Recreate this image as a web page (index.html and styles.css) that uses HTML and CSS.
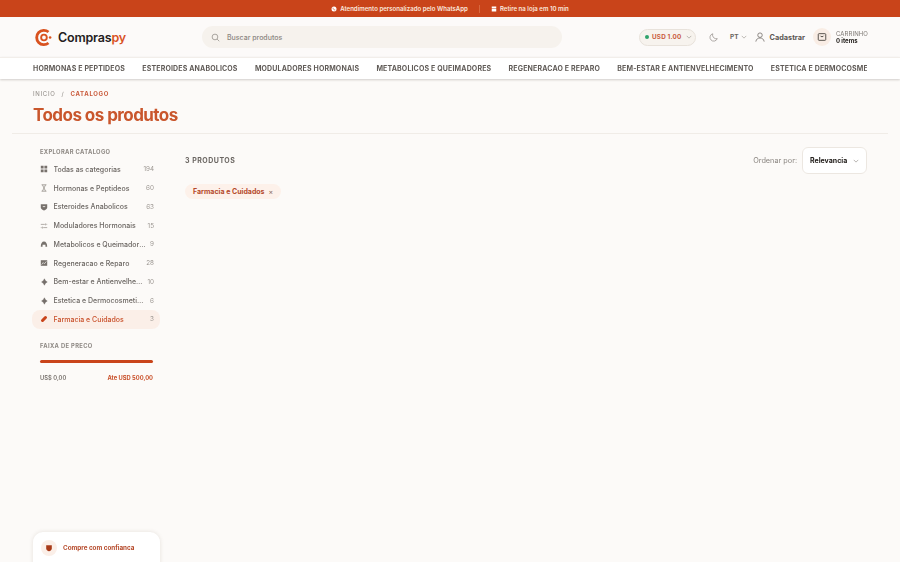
FILE: index.html
```html
<!DOCTYPE html>
<html lang="pt">
<head>
<meta charset="utf-8">
<title>Compraspy</title>
<link rel="stylesheet" href="styles.css">
</head>
<body>
<div class="topbar">
  <span class="top-item"><svg class="ti" viewBox="0 0 12 12"><circle cx="6" cy="6" r="5" fill="#fff"/><path d="M4 3.500c0 2.500 2 4.500 4.500 4.500" stroke="#c9441a" stroke-width="1.300" fill="none"/></svg>Atendimento personalizado pelo WhatsApp</span>
  <span class="top-sep"></span>
  <span class="top-item"><svg class="ti" viewBox="0 0 12 12"><path d="M1.500 1h9v4h-9zM1.500 6h9v5h-9z" fill="#fff"/></svg>Retire na loja em 10 min</span>
</div>
<header class="header">
  <div class="brand">
    <svg class="logo" viewBox="0 0 18 20"><path d="M14.300 4.200A7.600 7.600 0 1 0 14.300 15.800" fill="none" stroke="#d9521f" stroke-width="3"/><circle cx="9.500" cy="10" r="3" fill="none" stroke="#d9521f" stroke-width="2"/><circle cx="16" cy="10" r="1.400" fill="#d9521f"/></svg>
    <span class="brand-name">Compras<span class="brand-py">py</span></span>
  </div>
  <div class="search">
    <svg class="search-ic" viewBox="0 0 12 12"><circle cx="5.300" cy="5.300" r="3.800" fill="none" stroke="#85807b" stroke-width=".9"/><path d="M8.200 8.200l2.800 2.800" stroke="#85807b" stroke-width=".9"/></svg>
    <span>Buscar produtos</span>
  </div>
  <div class="actions">
    <div class="currency"><span class="dot"></span><span class="cur-text">USD 1.00</span><svg class="chev" viewBox="0 0 8 8"><path d="M1 2.500l3 3 3-3" fill="none" stroke="#a19b95" stroke-width=".9"/></svg></div>
    <svg class="moon" viewBox="0 0 12 12"><path d="M5 1a5 5 0 1 0 6 6.500A5 5 0 0 1 5 1z" fill="none" stroke="#8a8580" stroke-width=".9"/></svg>
    <div class="lang">PT<svg class="chev" viewBox="0 0 8 8"><path d="M1 2.500l3 3 3-3" fill="none" stroke="#a19b95" stroke-width=".9"/></svg></div>
    <div class="account"><svg class="user" viewBox="0 0 12 12"><circle cx="6" cy="3.800" r="2.700" fill="none" stroke="#6b6662" stroke-width=".9"/><path d="M1 11.500c.5-3 2.500-4.300 5-4.300s4.500 1.300 5 4.300" fill="none" stroke="#6b6662" stroke-width=".9"/></svg>Cadastrar</div>
    <div class="cart">
      <span class="cart-ic"><svg viewBox="0 0 12 12"><rect x="1.500" y="2" width="9" height="8" rx="1" fill="none" stroke="#3c3733" stroke-width="1"/><path d="M4 4.500c.3 1.500 3.700 1.500 4 0" fill="none" stroke="#3c3733" stroke-width="1"/></svg></span>
      <div class="cart-text"><span class="cart-label">CARRINHO</span><span class="cart-count">0 items</span></div>
    </div>
  </div>
</header>
<nav class="nav">
  <div class="nav-inner">
    <a>HORMONAS E PEPTIDEOS</a><a>ESTEROIDES ANABOLICOS</a><a>MODULADORES HORMONAIS</a><a>METABOLICOS E QUEIMADORES</a><a>REGENERACAO E REPARO</a><a>BEM-ESTAR E ANTIENVELHECIMENTO</a><a>ESTETICA E DERMOCOSMETICOS</a>
  </div>
</nav>
<section class="page-head">
  <div class="crumbs"><span>INICIO</span><span class="crumb-sep">/</span><span class="crumb-now">CATALOGO</span></div>
  <h1>Todos os produtos</h1>
</section>
<main class="main">
  <aside class="side">
    <div class="side-title">EXPLORAR CATALOGO</div>
    <ul class="cats">
      <li><svg class="ci" viewBox="0 0 10 10"><path d="M1 1h3.500v3.500H1zM5.500 1H9v3.500H5.500zM1 5.500h3.500V9H1zM5.500 5.500H9V9H5.500z" fill="#77716c"/></svg><span class="cn">Todas as categorias</span><span class="cc">194</span></li>
      <li><svg class="ci" viewBox="0 0 10 10"><path d="M2 1h6M2 9h6M3 1l4 8M7 1L3 9" fill="none" stroke="#96908a" stroke-width="1"/></svg><span class="cn">Hormonas e Peptideos</span><span class="cc">60</span></li>
      <li><svg class="ci" viewBox="0 0 10 10"><path d="M1 1.500h8V6c0 1.500-2 2.700-4 3.300C3 8.700 1 7.500 1 6z" fill="#77716c"/><path d="M3.500 4.500h3" stroke="#fcfaf8"/></svg><span class="cn">Esteroides Anabolicos</span><span class="cc">63</span></li>
      <li><svg class="ci" viewBox="0 0 10 10"><path d="M1 3h5M8 3h1M1 7h1M4 7h5" stroke="#96908a" stroke-width=".9"/><path d="M7 1.800v2.400M3 5.800v2.400" stroke="#96908a" stroke-width=".9"/></svg><span class="cn">Moduladores Hormonais</span><span class="cc">15</span></li>
      <li><svg class="ci" viewBox="0 0 10 10"><path d="M1 8.500C1 4.500 2.500 2 5 2s4 2.500 4 6.500H6.800V6H3.200v2.500z" fill="#77716c"/></svg><span class="cn">Metabolicos e Queimadores</span><span class="cc">9</span></li>
      <li><svg class="ci" viewBox="0 0 10 10"><rect x="1" y="1.500" width="8" height="7" fill="#77716c"/><path d="M2 7l2-2.500 1.500 1.500L8 3" fill="none" stroke="#fcfaf8" stroke-width=".8"/></svg><span class="cn">Regeneracao e Reparo</span><span class="cc">28</span></li>
      <li><svg class="ci" viewBox="0 0 10 10"><path d="M5.500 1v8M2 5h7M5.500 1L7 3.500 9 5 7 6.500 5.500 9 4 6.500 2 5 4 3.500z" fill="#77716c" stroke="#77716c" stroke-width=".4"/></svg><span class="cn">Bem-estar e Antienvelhecimento</span><span class="cc">10</span></li>
      <li><svg class="ci" viewBox="0 0 10 10"><path d="M5.500 1v8M2 5h7M5.500 1L7 3.500 9 5 7 6.500 5.500 9 4 6.500 2 5 4 3.500z" fill="#77716c" stroke="#77716c" stroke-width=".4"/></svg><span class="cn">Estetica e Dermocosmeticos</span><span class="cc">6</span></li>
      <li class="active"><svg class="ci" viewBox="0 0 10 10"><path d="M1.800 8.200a1.900 1.900 0 0 1 0-2.700l3.700-3.700a1.900 1.900 0 0 1 2.700 2.700L4.500 8.200a1.900 1.900 0 0 1-2.700 0z" fill="#c9441a"/></svg><span class="cn">Farmacia e Cuidados</span><span class="cc">3</span></li>
    </ul>
    <div class="side-title price-title">FAIXA DE PRECO</div>
    <div class="range"></div>
    <div class="range-vals"><span>US$ 0,00</span><span class="range-max">Ate USD 500,00</span></div>
    <div class="trust">
      <span class="trust-ic"><svg viewBox="0 0 10 10"><path d="M1.500 1.500h7V6C8.500 7.500 6.800 8.600 5 9.200 3.200 8.600 1.500 7.500 1.500 6z" fill="#a83a18"/></svg></span>
      <span>Compre com confianca</span>
    </div>
  </aside>
  <section class="content">
    <div class="toolbar">
      <span class="count">3 PRODUTOS</span>
      <div class="sort"><span class="sort-label">Ordenar por:</span><div class="select">Relevancia<svg class="chev" viewBox="0 0 8 8"><path d="M1 2.500l3 3 3-3" fill="none" stroke="#8a8580" stroke-width=".8"/></svg></div></div>
    </div>
    <div class="chips"><span class="chip">Farmacia e Cuidados<span class="chip-x">×</span></span></div>
  </section>
</main>
</body>
</html>
```
FILE: styles.css
```css
* { box-sizing: border-box; }
html, body { margin: 0; height: 562px; overflow: hidden; }
body { background: #fcfaf8; font-family: "Inter", "Liberation Sans", sans-serif; color: #6b6662; filter: blur(.25px); }
svg { display: block; flex: none; }
ul { list-style: none; margin: 0; padding: 0; }

.topbar { height: 17px; background: #c9441a; color: #fbe9df; font-size: 6.100px; font-weight: 600; display: flex; align-items: center; justify-content: center; gap: 10px; }
.top-item { display: flex; align-items: center; gap: 3px; }
.ti { width: 6px; height: 6px; }
.top-sep { width: 1px; height: 8px; background: #d8683f; margin: 0 1px; }

.header { height: 40px; padding: 0 32px 0 35px; display: flex; align-items: center; background: #fcfaf9; }
.brand { display: flex; align-items: center; gap: 6px; width: 167px; }
.logo { width: 17px; height: 19px; }
.brand-name { font-size: 12.500px; font-weight: 600; letter-spacing: -.2px; color: #24201d; }
.brand-py { color: #d9521f; }
.search { width: 360px; height: 22px; border-radius: 11px; background: #f6f2ed; display: flex; align-items: center; padding-left: 9px; gap: 7px; font-size: 7px; font-weight: 500; color: #8a8580; }
.search-ic { width: 9px; height: 9px; }
.actions { margin-left: auto; display: flex; align-items: center; }
.currency { width: 57px; height: 17px; border-radius: 9px; background: #f7f3ee; border: 1px solid #e8e2db; display: flex; align-items: center; padding-left: 5px; font-size: 6.300px; font-weight: 700; letter-spacing: .2px; color: #c9593a; }
.dot { width: 4px; height: 4px; border-radius: 50%; background: #2fa36b; margin-right: 3px; }
.chev { width: 6px; height: 6px; margin-left: 4px; }
.moon { width: 9px; height: 9px; margin-left: 13px; }
.lang { margin-left: 12px; display: flex; align-items: center; font-size: 6.500px; font-weight: 700; color: #6b6662; }
.lang .chev { margin-left: 2px; }
.account { margin-left: 8px; display: flex; align-items: center; gap: 5px; font-size: 7.300px; font-weight: 700; color: #5b5652; }
.user { width: 10px; height: 10px; }
.cart { margin-left: 8px; display: flex; align-items: center; gap: 5px; }
.cart-ic { width: 18px; height: 18px; border-radius: 50%; background: #f9ede5; display: flex; align-items: center; justify-content: center; }
.cart-ic svg { width: 10px; height: 10px; }
.cart-text { display: flex; flex-direction: column; line-height: 7px; }
.cart-label { font-size: 6px; color: #7c7772; letter-spacing: .1px; }
.cart-count { font-size: 6px; font-weight: 700; color: #24201d; }

.nav { height: 21.500px; background: #fff; border-top: 1px solid #f2eeea; box-shadow: 0 1px 2px rgba(60, 50, 40, .22); padding: 0 33px; position: relative; }
.nav-inner { height: 100%; display: flex; align-items: center; gap: 17.300px; overflow: hidden; white-space: nowrap; font-size: 7px; font-weight: 700; letter-spacing: .15px; color: #605b57; }

.page-head { height: 55.500px; padding: 11px 33px 0 21px; margin: 0 12px; border-bottom: 1px solid #f0ece7; }
.crumbs { display: flex; gap: 6px; font-size: 6px; letter-spacing: .7px; line-height: 8px; color: #8d8883; }
.crumb-now { color: #c9593a; font-weight: 700; }
h1 { margin: 5px 0 0; font-size: 17px; line-height: 24px; font-weight: 700; color: #c9562c; letter-spacing: -.55px; }

.main { display: flex; padding: 0 33px 0 32px; }
.side { width: 128px; flex: none; }
.side-title { font-size: 5.800px; font-weight: 700; letter-spacing: .35px; color: #8d8883; padding: 14px 0 0 8px; line-height: 7px; }
.cats { margin-top: 5px; }
.cats li { height: 18.750px; display: flex; align-items: center; padding: 0 6px 0 8px; border-radius: 8px; font-size: 7px; color: #6b6662; font-weight: 500; }
.ci { width: 8px; height: 8px; margin-right: 5.500px; }
.cn { flex: 1; min-width: 0; white-space: nowrap; overflow: hidden; text-overflow: ellipsis; padding-right: 4px; }
.cc { margin-left: auto; font-size: 6.300px; font-weight: 400; color: #9a9590; }
.cats .active { background: #fbefe8; color: #c9502a; }
.price-title { padding-top: 13px; }
.range { height: 3px; margin: 11px 7px 0 8px; border-radius: 2px; background: #c9441a; }
.range-vals { display: flex; justify-content: space-between; margin: 11px 7px 0 8px; font-size: 5.800px; font-weight: 600; line-height: 8px; color: #77716c; }
.range-max { color: #c9502a; font-weight: 700; }
.trust { margin-top: 150px; margin-left: 1px; height: 60px; border-radius: 10px 10px 0 0; background: #fff; box-shadow: 0 0 4px rgba(90, 70, 50, .14); display: flex; align-items: flex-start; padding: 8px 8px; gap: 6px; font-size: 6.300px; font-weight: 700; color: #b5492a; line-height: 17px; }
.trust-ic { width: 16px; height: 16px; border-radius: 50%; background: #fbefe8; display: flex; align-items: center; justify-content: center; }
.trust-ic svg { width: 8px; height: 8px; }

.content { flex: 1; padding-left: 25px; }
.toolbar { display: flex; align-items: center; justify-content: space-between; height: 27px; margin-top: 13px; }
.count { font-size: 7px; font-weight: 700; letter-spacing: .5px; color: #6b6662; }
.sort { display: flex; align-items: center; gap: 5px; }
.sort-label { font-size: 7.300px; color: #8a8580; font-weight: 400; }
.select { width: 65px; height: 27px; border-radius: 6px; background: #fff; border: 1px solid #ece7e1; display: flex; align-items: center; padding-left: 7px; font-size: 7px; font-weight: 700; color: #24201d; }
.select .chev { margin-left: 6px; }
.chips { margin-top: 4px; }
.chip { display: inline-flex; align-items: center; height: 15px; padding: 0 8px; border-radius: 8px; background: #fdf1ea; font-size: 7px; font-weight: 700; color: #b5492a; }
.chip-x { margin-left: 4px; font-weight: 400; color: #8a6a5e; }
```
